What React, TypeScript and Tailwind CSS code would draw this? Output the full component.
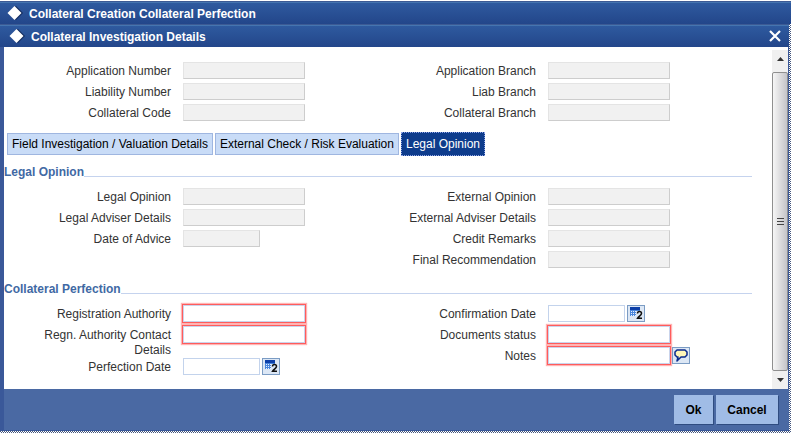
import { useId, useState } from 'react';
import type { ReactNode } from 'react';
import clsx from 'clsx';

const tabs = ['Field Investigation / Valuation Details', 'External Check / Risk Evaluation', 'Legal Opinion'];

function Diamond() {
  return (
    <svg className="h-4 w-4 shrink-0" viewBox="0 0 16 16">
      <path d="M9 1 L16 8 L9 15 L7 14 V2 Z" fill="#10295c" />
      <path d="M7.500 1 L14.500 8 L7.500 15 L0.500 8 Z" fill="#fff" />
    </svg>
  );
}

function CalendarIcon() {
  return (
    <svg className="h-[15px] w-4" viewBox="0 0 16 15">
      <rect x="2" y="1" width="10" height="9" fill="#4a86dc" />
      <rect x="2" y="1" width="10" height="3" fill="#0d3fa8" />
      <path d="M3 5.5h8M3 7.5h8M3 9.500h8" stroke="#e8f1ff" strokeDasharray="1 1" />
      <path d="M8 5h7v9H8z" fill="#dce7f5" />
      <path d="M9.500 7.500 C9.500 4.800 13.500 4.800 13.500 7.500 C13.500 9 10.500 10.500 9.500 12.300 H14" fill="none" stroke="#111" strokeWidth="1.500" />
    </svg>
  );
}

function NoteIcon() {
  return (
    <svg className="h-[15px] w-4" viewBox="0 0 16 15">
      <path d="M4 2 H12 L14 4 V7 L12 9 H8 L4 13 L5 9 H4 L2 7 V4 Z" fill="#fff6b8" stroke="#0a2a8c" strokeWidth="1.500" strokeLinejoin="round" />
    </svg>
  );
}

function TitleBar({ title, className, children }: { title: string; className: string; children?: ReactNode }) {
  return (
    <div
      className={clsx(
        'flex h-[23px] items-center gap-[6px] border-t border-[#3c5a94] bg-linear-to-b from-[#2f5ba0] to-[#23468a] font-bold text-white shadow-[inset_0_3px_0_-2px_#4575b0]',
        className
      )}
    >
      <Diamond />
      <h1 className="flex-1 pt-px">{title}</h1>
      {children}
    </div>
  );
}

type FieldProps = { label: string; kind?: 'readonly' | 'required' | 'normal'; short?: boolean; action?: 'date' | 'note' };

function Field({ label, kind = 'readonly', short, action }: FieldProps) {
  const id = useId();
  return (
    <div className="flex min-h-[21px] items-start">
      <label htmlFor={id} className="w-[167px] shrink-0 pt-[2px] pl-6 text-right leading-[15px]">
        {label}
      </label>
      <input
        id={id}
        readOnly={kind === 'readonly'}
        className={clsx(
          'ml-3 h-[17px] border px-1 outline-none',
          short ? 'w-[77px]' : 'w-[122px]',
          kind === 'readonly' && 'border-[#e4e4e4] border-r-[#cdcdcd] border-b-[#cdcdcd] bg-[#f1f1f1]',
          kind === 'normal' && 'border-[#c3d3ec] bg-white',
          kind === 'required' && 'border-[#c9d4ec] bg-white shadow-[0_0_0_1px_#ff5c5c,0_0_1px_2px_#ffb4b4]'
        )}
      />
      {action && (
        <button
          aria-label={action === 'date' ? `Pick ${label}` : `Edit ${label}`}
          className="ml-[2px] flex h-[17px] w-[18px] items-center justify-center border border-[#7b9cc4] bg-[#dce7f5]"
        >
          {action === 'date' ? <CalendarIcon /> : <NoteIcon />}
        </button>
      )}
    </div>
  );
}

function Section({ title, children }: { title: string; children: ReactNode }) {
  return (
    <section>
      <div className="flex h-4 items-center">
        <h2 className="font-bold text-[#4169a4]">{title}</h2>
        <div className="mt-2 h-px flex-1 bg-[#c5d3ee]" />
      </div>
      <div className="mt-2 grid grid-cols-2 pr-[18px]">{children}</div>
    </section>
  );
}

function Scrollbar() {
  return (
    <div className="mt-[3px] flex w-4 shrink-0 flex-col bg-[#f0f0f0]">
      <div className="flex h-[22px] items-center justify-center pb-1">
        <svg className="h-1 w-[7px]" viewBox="0 0 7 4">
          <path d="M0 4 L3.500 0 L7 4Z" fill="#333" />
        </svg>
      </div>
      <div className="flex flex-1 items-center justify-center rounded-xs border border-[#8f8f8f] bg-linear-to-r from-[#f6f6f6] to-[#c4c4c8]">
        <svg className="h-[9px] w-[7px]" viewBox="0 0 7 9">
          <path d="M0 1.500h7M0 4.500h7M0 7.500h7" stroke="#444" />
        </svg>
      </div>
      <div className="flex h-[18px] items-center justify-center">
        <svg className="h-1 w-[7px]" viewBox="0 0 7 4">
          <path d="M0 0 L3.500 4 L7 0Z" fill="#333" />
        </svg>
      </div>
    </div>
  );
}

export default function App() {
  const [active, setActive] = useState(2);

  return (
    <div className="bg-white pt-px font-['Liberation_Sans',Arial,sans-serif] text-[12px] text-[#333]">
      <TitleBar title="Collateral Creation Collateral Perfection" className="pl-[7px]" />
      <div className="bg-[repeating-conic-gradient(#44567e_0_25%,#fff_0_50%)] bg-[length:2px_2px] pr-[2px] pb-[2px]">
        <div className="bg-[#3a5899] pb-px">
          <TitleBar title="Collateral Investigation Details" className="pl-[9px]">
            <button aria-label="Close" className="mr-2">
              <svg className="h-3 w-3" viewBox="0 0 12 12">
                <path d="M1 1 L11 11 M11 1 L1 11" stroke="#fff" strokeWidth="2.200" />
              </svg>
            </button>
          </TitleBar>
          <div className="mr-px ml-1 flex bg-white">
            <main className="flex-1 pr-5 pb-[10px]">
              <div className="grid grid-cols-2 pt-[15px] pr-[18px]">
                <div>
                  <Field label="Application Number" />
                  <Field label="Liability Number" />
                  <Field label="Collateral Code" />
                </div>
                <div>
                  <Field label="Application Branch" />
                  <Field label="Liab Branch" />
                  <Field label="Collateral Branch" />
                </div>
              </div>
              <div role="tablist" className="mt-[7px] flex h-6 items-center gap-[2px] pl-[3px]">
                {tabs.map((tab, i) => (
                  <button
                    key={tab}
                    role="tab"
                    aria-selected={i === active}
                    onClick={() => setActive(i)}
                    className={clsx(
                      'border px-1 leading-5',
                      i === active
                        ? 'h-6 border-dotted border-[#8fa4e8] bg-[#0e3c8c] text-white'
                        : 'h-[22px] border-[#9fb6e0] bg-[#c9dcf7] text-black'
                    )}
                  >
                    {tab}
                  </button>
                ))}
              </div>
              <div className="mt-2">
                <Section title="Legal Opinion">
                  <div>
                    <Field label="Legal Opinion" />
                    <Field label="Legal Adviser Details" />
                    <Field label="Date of Advice" short />
                  </div>
                  <div>
                    <Field label="External Opinion" />
                    <Field label="External Adviser Details" />
                    <Field label="Credit Remarks" />
                    <Field label="Final Recommendation" />
                  </div>
                </Section>
              </div>
              <div className="mt-[9px]">
                <Section title="Collateral Perfection">
                  <div>
                    <Field label="Registration Authority" kind="required" />
                    <Field label="Regn. Authority Contact Details" kind="required" />
                    <Field label="Perfection Date" kind="normal" short action="date" />
                  </div>
                  <div>
                    <Field label="Confirmation Date" kind="normal" short action="date" />
                    <Field label="Documents status" kind="required" />
                    <Field label="Notes" kind="required" action="note" />
                  </div>
                </Section>
              </div>
            </main>
            <Scrollbar />
          </div>
          <footer className="ml-1 flex h-[41px] items-center justify-end gap-[3px] bg-[#4a69a3] pr-[11px] font-bold text-black">
            <button className="h-[29px] w-[39px] bg-[#a0bce6] pt-px shadow-[1px_1px_0_#2f4c80]">Ok</button>
            <button className="h-[29px] w-[62px] bg-[#a0bce6] pt-px shadow-[1px_1px_0_#2f4c80]">Cancel</button>
          </footer>
        </div>
      </div>
    </div>
  );
}
